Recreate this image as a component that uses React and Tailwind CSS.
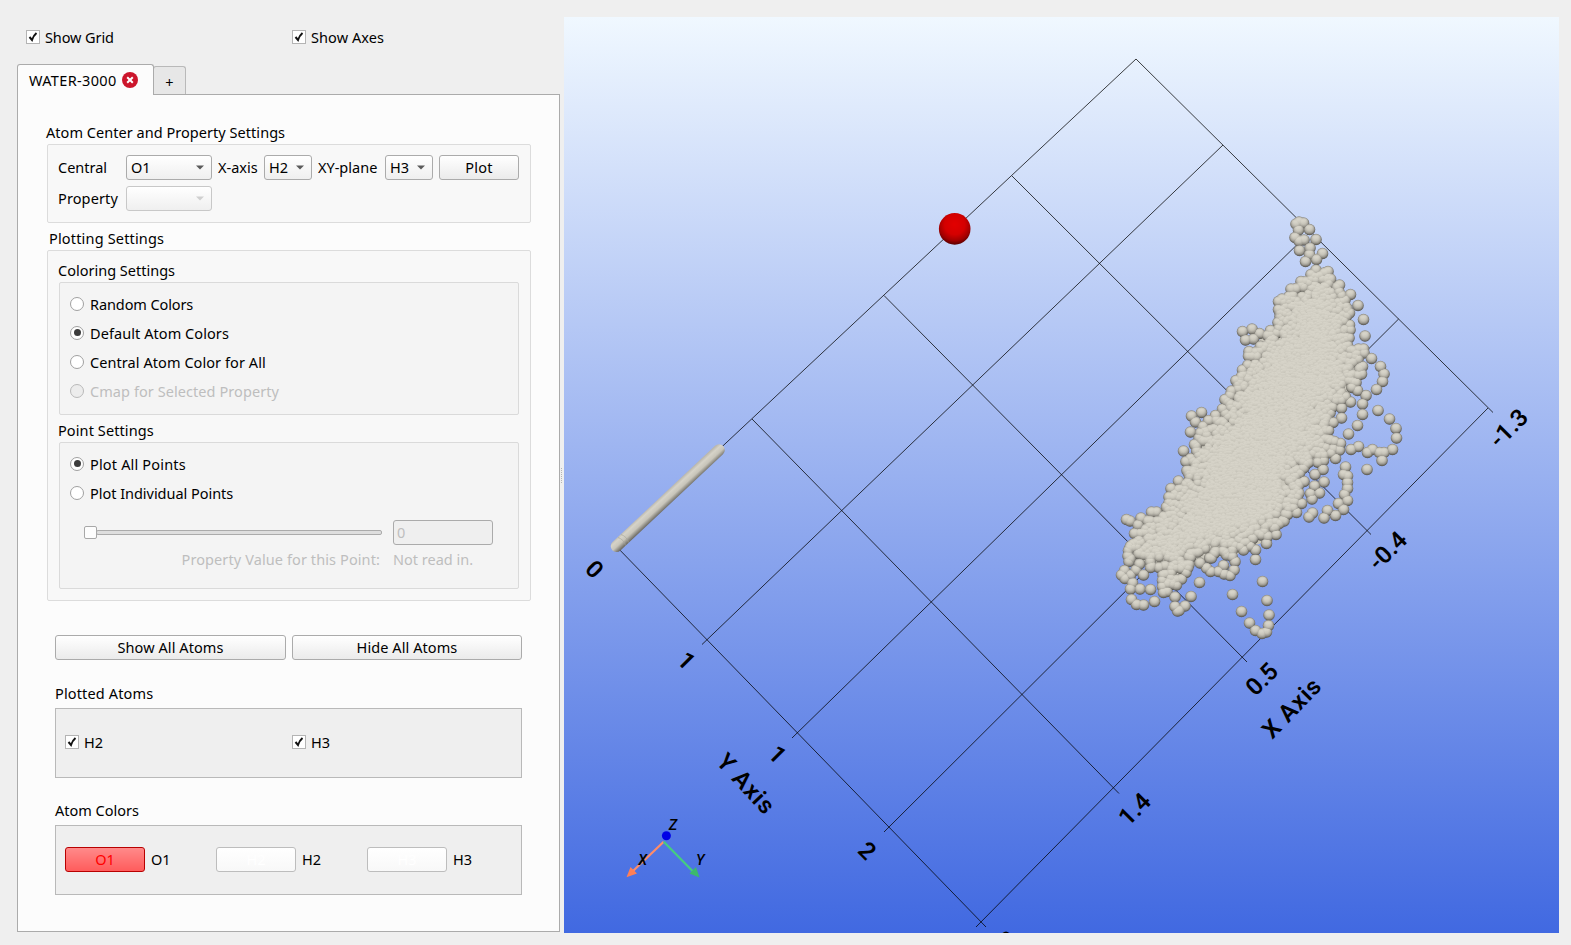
import React from "react";

const GRID = [
  [1136, 59, 616, 546], [1223, 145, 702, 644.5], [1310, 232, 792, 738], [1398.6, 319, 884, 832], [1488, 408, 976, 927],
  [1136, 59, 1493, 412.5], [1012, 176, 1371, 534.5], [884, 295.5, 1247, 662], [752, 419, 1119, 793.5], [614, 544, 986, 927],
];

const TICKS = [
  ["-1.3", 1508.5, 428, -45], ["-0.4", 1387.5, 550.5, -45], ["0.5", 1261.7, 679, -45], ["1.4", 1134.3, 809, -45], ["2.3", 1001, 947, -45],
  ["0", 594.7, 569, 45], ["1", 686.7, 660.7, 45], ["1", 777.7, 754.3, 45], ["2", 867.3, 850.7, 45],
];

const BALLS = [
  1299,222, 1296,224, 1303.5,223, 1298.5,230, 1309.5,229.5, 1295,237.5, 1299,241, 1304,240, 1316,239.5, 1299.5,250.5, 1310,248, 1309.5,254.5,
  1322.5,253.5, 1305.5,261.5, 1316.5,259.5, 1316,270, 1328,271.5, 1311,274.5, 1301,281.5, 1291,289, 1327.5,280, 1339.5,285, 1350.5,294.5,
  1358,305.5, 1363.5,319.5, 1365,336, 1282,299, 1278.5,301.5, 1289,301, 1278.5,309.5, 1280,316.5, 1278,322.5, 1270.5,330.5, 1259.5,333.5,
  1252,329, 1242.5,331.5, 1245.5,340, 1253.5,339, 1249,351.5, 1248.5,356, 1242.5,370, 1236,380.5, 1241,379, 1231.5,391, 1225,399.5,
  1222.5,409, 1215.5,415.5, 1201.5,412.5, 1191.5,416, 1195.5,422, 1208.5,420.5, 1203,426.5, 1190.5,432, 1199,438, 1347,308.5, 1349.5,313,
  1349.5,325, 1350,330, 1349,338, 1358.5,349, 1363.5,349, 1364,353, 1371.5,358.5, 1380.5,366.5, 1384,374, 1382.5,381.5, 1376.5,389.5,
  1366,395.5, 1362.5,404, 1362.5,414.5, 1357.5,425.5, 1348.5,434, 1378,410.5, 1389.5,419, 1396,428.5, 1396.5,438, 1357.5,390.5, 1350.5,402,
  1341.5,408, 1341.5,418, 1333,422.5, 1328.5,430.5, 1362.5,366.5, 1361.5,374, 1356,382.5, 1330,413, 1345,300, 1341,318,
  1183.5,451, 1194.5,444.5, 1186,461.5, 1190.5,458.5, 1187,470.5, 1196.5,470, 1178.5,481, 1185.5,484.5, 1171,488.5, 1169,497, 1175,494,
  1166.5,507, 1151.5,512, 1156.5,512, 1141,518, 1126.5,519.5, 1130,521, 1138,525, 1134.5,533.5, 1128.5,550.5, 1128,556, 1129,561.5,
  1124.5,570.5, 1121.5,575, 1125,578.5, 1130.5,575, 1136,570, 1143.5,575, 1150.5,567.5, 1159,567.5, 1132.5,583, 1130.5,589, 1140,589,
  1150.5,589.5, 1131.5,599.5, 1136.5,604.5, 1143.5,605, 1154.5,601.5, 1163,575, 1162.5,580.5, 1162.5,586.5, 1163.5,592.5, 1167,591.5,
  1175,597, 1191,596.5, 1185,606, 1177.5,611, 1175,606.5, 1179,610.5, 1176.5,585, 1181.5,579, 1186,572.5, 1171.5,579, 1199.5,582.5,
  1232.5,594.5, 1241.5,611.5, 1249.5,623, 1255.5,630.5, 1262,633.5, 1266.5,632, 1268.5,625.5, 1269,615, 1267,600.5, 1262.5,581.5,
  1255.5,559.5, 1255.5,550, 1230,575.5, 1224,574, 1218.5,571.5, 1210.5,571.5, 1206.5,568, 1234,570, 1235,561.5, 1223.5,565.5, 1211.5,558,
  1226.5,555, 1200,563, 1243.5,550, 1250,546, 1266.5,543.5, 1276,534.5, 1273.5,528, 1284,521, 1296.5,512.5, 1301.5,503.5, 1312,499,
  1310.5,493.5, 1319.5,493, 1324,482, 1314.5,486, 1304,481.5, 1315,474.5, 1323,469.5, 1304,467.5, 1323.5,460.5, 1335.5,458.5, 1339.5,450,
  1340.5,443.5, 1330,440, 1351,449.5, 1358.5,446.5, 1367.5,452.5, 1372.5,449.5, 1379.5,452.5, 1384,452.5, 1382,460.5, 1392.5,449.5,
  1367,469.5, 1345.5,467, 1343.5,474.5, 1347.5,476, 1347.5,482.5, 1347.5,488.5, 1344.5,494.5, 1347.5,500.5, 1338.5,503.5, 1343.5,509.5,
  1335.5,515.5, 1327.5,510.5, 1324,518, 1312.5,513, 1309,517,
];

const HULL = [
  [1316,272], [1326,273], [1338,286], [1347,297], [1348,325], [1349,345], [1361,351], [1360,372], [1354,385], [1346,400], [1337,405],
  [1329,413], [1327,430], [1337,444], [1331,455], [1321,461], [1304,468], [1299,480], [1302,492], [1299,503], [1284,519], [1272,533],
  [1262,543], [1244,549], [1234,557], [1222,556], [1205,562], [1190,567], [1178,581], [1166,588], [1162,570], [1140,565], [1130,562],
  [1129,548], [1136,533], [1146,521], [1167,509], [1171,494], [1187,484], [1188,465], [1195,445], [1201,430], [1223,411], [1227,398],
  [1243,372], [1249,353], [1262,337], [1279,325], [1280,303], [1301,284], [1311,276],
];

const LAYERS = [
  [5.8, "#8f8d85", "#55534e"],
  [5.3, "#b0ada4", "#6d6b64"],
  [4.7, "#c6c3b9", "#88857d"],
  [3.9, "#d2cfc4", "#a19e95"],
  [3.0, "#d7d4c9", "#b7b4aa"],
  [2.0, "#d7d4c9", "#c6c3b8"],
];

function edgeDistance(x, y) {
  let best = 1e9;
  let inside = false;
  for (let i = 0, j = HULL.length - 1; i < HULL.length; j = i++) {
    const [ax, ay] = HULL[i];
    const [bx, by] = HULL[j];
    if (ay > y !== by > y && x < ((bx - ax) * (y - ay)) / (by - ay) + ax) inside = !inside;
    const dx = bx - ax;
    const dy = by - ay;
    const t = Math.max(0, Math.min(1, ((x - ax) * dx + (y - ay) * dy) / (dx * dx + dy * dy)));
    best = Math.min(best, Math.hypot(ax + t * dx - x, ay + t * dy - y));
  }
  return inside ? best : -1;
}

function buildCloud() {
  let seed = 7;
  const rand = () => {
    seed = (seed * 16807) % 2147483647;
    return seed / 2147483647;
  };
  const layers = LAYERS.map(() => []);
  for (let i = 0; i < BALLS.length; i += 2) layers.forEach((l) => l.push([BALLS[i], BALLS[i + 1]]));
  const step = 2.2;
  for (let gy = 268; gy < 592; gy += step) {
    for (let gx = 1120; gx < 1368; gx += step) {
      const x = gx + rand() * step;
      const y = gy + rand() * step;
      const keep = rand();
      const d = edgeDistance(x, y);
      if (d < 0) continue;
      const s = Math.max(2.2, (y > 530 ? 5.8 : 5.3) - d * 0.12);
      if (keep > (step / s) ** 2) continue;
      LAYERS.forEach(([r], k) => {
        if (r <= s * 1.25 || k === 5) layers[k].push([Math.round(x * 10) / 10, Math.round(y * 10) / 10]);
      });
    }
  }
  return layers;
}

const CLOUD = buildCloud();

function Scene() {
  return (
    <svg className="block h-[916px] w-[995px]" viewBox="564 17 995 916">
      <defs>
        {LAYERS.map(([r, a, b], k) => (
          <linearGradient key={k} id={"shade" + k} x1="0.1" y1="0" x2="0.25" y2="1">
            <stop offset="0.2" stopColor={a} />
            <stop offset="1" stopColor={b} />
          </linearGradient>
        ))}
        <radialGradient id="red" cx="0.5" cy="0.36" r="0.64">
          <stop offset="0" stopColor="#e20000" />
          <stop offset="0.5" stopColor="#d40000" />
          <stop offset="0.8" stopColor="#a00000" />
          <stop offset="1" stopColor="#580000" />
        </radialGradient>
        <linearGradient id="tube" gradientUnits="userSpaceOnUse" x1="664" y1="493.5" x2="672" y2="502.2">
          <stop offset="0" stopColor="#bab7ad" />
          <stop offset="0.25" stopColor="#d6d3c8" />
          <stop offset="0.6" stopColor="#c8c5ba" />
          <stop offset="1" stopColor="#716f68" />
        </linearGradient>
      </defs>
      <g stroke="#000" strokeWidth="1" strokeOpacity="0.75">
        {GRID.map(([a, b, c, d], i) => (
          <line key={i} x1={a} y1={b} x2={c} y2={d} />
        ))}
      </g>
      <path d="M616.5 546.3 L719 450" stroke="url(#tube)" strokeWidth="11.6" strokeLinecap="round" />
      <path d="M618 537.5 q6 2 7.5 8 M621 534.5 q6 2 7.5 8" fill="none" stroke="#a5a299" strokeWidth="0.6" />
      <circle cx="954.7" cy="228.9" r="15.8" fill="url(#red)" />
      <polygon points={HULL.map((p) => p.join(",")).join(" ")} fill="#c9c6bb" />
      {CLOUD.map((pts, k) => (
        <g key={k} fill={"url(#shade" + k + ")"}>
          {pts.map(([x, y], i) => (
            <circle key={i} cx={x} cy={y - (5.8 - LAYERS[k][0]) * 0.15} r={LAYERS[k][0]} />
          ))}
        </g>
      ))}
      <g fontFamily="Roboto, 'Liberation Sans', sans-serif" fontWeight="600" fontSize="24" textAnchor="middle" fill="#000">
        {TICKS.map(([t, x, y, a], i) => (
          <text key={i} transform={`translate(${x} ${y}) rotate(${a})`} y="8.5">{t}</text>
        ))}
        <text transform="translate(1292 708) rotate(-46)" y="8" letterSpacing="0.9">X Axis</text>
        <text transform="translate(746 784) rotate(47)" y="8" letterSpacing="0.9">Y Axis</text>
      </g>
      <path d="M663.7 841.7 L633 871" stroke="#ff8c69" strokeWidth="2.2" />
      <path d="M626.5 877.3 L630.5 867 L637 873.5 Z" fill="#ff7f55" />
      <path d="M663.7 841.7 L693 871.5" stroke="#45cd80" strokeWidth="2.2" />
      <path d="M699.5 877.5 L689.5 873.5 L696 867 Z" fill="#3cb96d" />
      <circle cx="666.4" cy="835.7" r="4.5" fill="#0000e6" />
      <g fontFamily="Roboto, 'Liberation Sans', sans-serif" fontStyle="italic" fontWeight="500" fontSize="14.5" textAnchor="middle">
        <text x="642.7" y="864.5">X</text>
        <text x="700.3" y="864.7">Y</text>
        <text x="673" y="830">Z</text>
      </g>
    </svg>
  );
}

function Check({ label, className = "", textClass = "" }) {
  return (
    <div className={"flex h-[14px] items-center " + className}>
      <span className="flex h-[14px] w-[14px] items-center justify-center border border-[#b4b4b4] bg-white">
        <svg className="h-[12px] w-[12px]" viewBox="0 0 12 12" fill="none" stroke="#111" strokeWidth="2">
          <path d="M2.5 6 L5 9 Q6.5 4.5 9.5 2" />
        </svg>
      </span>
      <span className={"ml-[5px] whitespace-nowrap " + textClass}>{label}</span>
    </div>
  );
}

function Radio({ label, on, disabled, textClass = "tracking-[0.07px]" }) {
  return (
    <div className="flex h-[29px] items-center">
      <span className={"flex h-[14px] w-[14px] items-center justify-center rounded-full border " + (disabled ? "border-[#b9b9b9] bg-[#ececec]" : "border-[#a0a0a0] bg-white")}>
        {on && <span className="h-[7px] w-[7px] rounded-full bg-[#3c3c3c]" />}
      </span>
      <span className={"ml-[6px] " + textClass + (disabled ? " text-[#bebebe]" : "")}>{label}</span>
    </div>
  );
}

const BTN = "flex h-[25px] items-center rounded-[3px] border ";

function Combo({ label, className, disabled }) {
  return (
    <div className={BTN + "justify-between bg-[linear-gradient(#ffffff,#efefef)] pl-[4px] pr-[7px] " + (disabled ? "border-[#c8c8c8] " : "border-[#ababab] ") + className}>
      <span className="pb-[2px]">{label}</span>
      <svg className="h-[5px] w-[8px]" viewBox="0 0 8 5">
        <path d="M0 0.5 H8 L4 4.5 Z" fill={disabled ? "#cfcfcf" : "#5a5a5a"} />
      </svg>
    </div>
  );
}

function Button({ label, className }) {
  return <div className={BTN + "justify-center border-[#ababab] bg-[linear-gradient(#ffffff,#ebebeb)] pb-[2px] " + className}>{label}</div>;
}

function Swatch({ label, red }) {
  return (
    <div className="flex w-[151px] items-center">
      <div className={BTN + "w-[80px] justify-center pb-[2px] " + (red ? "border-[#b80000] bg-[linear-gradient(#ff8a8a,#ff5c5c)] text-[#ff0000]" : "border-[#bdbdbd] bg-[linear-gradient(#ffffff,#f8f8f8)] text-white")}>{label}</div>
      <span className="ml-[6px] pb-[2px]">{label}</span>
    </div>
  );
}

function Title({ children, className }) {
  return <div className={"h-[20px] leading-[18px] " + className}>{children}</div>;
}

export default function App() {
  return (
    <div className="flex h-[945px] w-[1571px] overflow-hidden bg-[#efefef] font-['Noto_Sans',sans-serif] text-[14.5px] leading-[20px] text-black">
      <div className="w-[560px] shrink-0 pl-[17px]">
        <div className="flex h-[64px] pl-[9px] pt-[30px]">
          <Check label="Show Grid" className="w-[266px]" textClass="tracking-[-0.1px]" />
          <Check label="Show Axes" textClass="tracking-[0.08px]" />
        </div>
        <div className="flex h-[30px] items-end">
          <div className="z-10 -mb-px flex h-[31px] w-[137px] items-center rounded-t-[3px] border border-b-0 border-[#ababab] bg-[#fcfcfc] pl-[11px]">
            <span className="whitespace-nowrap tracking-[0.35px]">WATER-3000</span>
            <svg className="ml-[5px] h-[16px] w-[16px]" viewBox="0 0 16 16">
              <circle cx="8" cy="8" r="8" fill="#cc162c" />
              <path d="M5.2 5.2 L10.8 10.8 M10.8 5.2 L5.2 10.8" stroke="#fff" strokeWidth="2" />
            </svg>
          </div>
          <div className="-ml-px flex h-[28px] w-[33px] items-center justify-center rounded-t-[3px] border border-b-0 border-[#b9b9b9] bg-[#e7e7e7] pt-[3px]">+</div>
        </div>
        <div className="h-[838px] w-[543px] border border-[#ababab] bg-[#fcfcfc] pt-[28px]">
          <Title className="pl-[28px] tracking-[0.04px]">Atom Center and Property Settings</Title>
          <div className="ml-[29px] mt-px h-[79px] w-[484px] rounded-[2px] border border-[#dcdcdc] bg-[#f8f8f8] pl-[10px] pt-[10px]">
            <div className="flex items-center whitespace-nowrap">
              <span className="w-[68px] pb-[2px]">Central</span>
              <Combo label="O1" className="w-[86px]" />
              <span className="ml-[6px] w-[46px] pb-[2px]">X-axis</span>
              <Combo label="H2" className="w-[48px]" />
              <span className="ml-[6px] w-[67px] pb-[2px]">XY-plane</span>
              <Combo label="H3" className="w-[48px]" />
              <Button label="Plot" className="ml-[6px] w-[80px] tracking-[0.3px]" />
            </div>
            <div className="mt-[6px] flex items-center">
              <span className="w-[68px] pb-[2px] tracking-[0.12px]">Property</span>
              <Combo label="" disabled className="w-[86px]" />
            </div>
          </div>
          <Title className="mt-[6px] pl-[31px] tracking-[0.17px]">Plotting Settings</Title>
          <div className="ml-[29px] mt-px h-[351px] w-[484px] rounded-[2px] border border-[#dcdcdc] bg-[#f8f8f8] pt-[10px]">
            <Title className="pl-[10px]">Coloring Settings</Title>
            <div className="ml-[11px] mt-px h-[133px] w-[460px] rounded-[2px] border border-[#dadada] bg-[#f4f4f4] pl-[10px] pt-[6px]">
              <Radio label="Random Colors" textClass="tracking-[-0.1px]" />
              <Radio label="Default Atom Colors" on />
              <Radio label="Central Atom Color for All" />
              <Radio label="Cmap for Selected Property" disabled />
            </div>
            <Title className="mt-[6px] pl-[10px] tracking-[0.1px]">Point Settings</Title>
            <div className="ml-[11px] mt-px h-[147px] w-[460px] rounded-[2px] border border-[#dadada] bg-[#f4f4f4] pl-[10px] pt-[6px]">
              <Radio label="Plot All Points" on textClass="tracking-[0.17px]" />
              <Radio label="Plot Individual Points" textClass="tracking-[-0.03px]" />
              <div className="mt-[13px] flex h-[25px] items-center pl-[14px]">
                <div className="z-10 h-[13px] w-[13px] rounded-[2px] border border-[#a8a8a8] bg-[#fdfdfd]" />
                <div className="-ml-px h-[5px] w-[286px] rounded-[2px] border border-[#ababab] bg-[#dedede]" />
                <div className="ml-[11px] flex h-[25px] w-[100px] items-center rounded-[3px] border border-[#ababab] bg-[#efefef] pb-[2px] pl-[3px] text-[#bebebe]">0</div>
              </div>
              <div className="mt-[4px] flex text-[#bebebe]">
                <span className="w-[310px] text-right tracking-[0.1px]">Property Value for this Point:</span>
                <span className="ml-[13px]">Not read in.</span>
              </div>
            </div>
          </div>
          <div className="ml-[37px] mt-[34px] flex gap-[6px]">
            <Button label="Show All Atoms" className="w-[231px] tracking-[0.08px]" />
            <Button label="Hide All Atoms" className="w-[230px] tracking-[0.08px]" />
          </div>
          <Title className="ml-[37px] mt-[24px] tracking-[0.15px]">Plotted Atoms</Title>
          <div className="ml-[37px] mt-[4px] flex h-[70px] w-[467px] items-center border border-[#b9b9b9] bg-[#efefef] pb-[2px] pl-[9px]">
            <Check label="H2" className="w-[227px]" />
            <Check label="H3" />
          </div>
          <Title className="ml-[37px] mt-[23px]">Atom Colors</Title>
          <div className="ml-[37px] mt-[4px] flex h-[70px] w-[467px] items-center border border-[#b9b9b9] bg-[#efefef] pb-px pl-[9px]">
            <Swatch label="O1" red />
            <Swatch label="H2" />
            <Swatch label="H3" />
          </div>
        </div>
      </div>
      <div className="flex w-[4px] shrink-0 flex-col gap-[1px] pl-[1px] pt-[468px]">
        {[0, 1, 2, 3, 4, 5, 6, 7].map((i) => (
          <span key={i} className="h-px w-px bg-[#b5b5b5]" />
        ))}
      </div>
      <div className="mt-[17px] h-[916px] w-[995px] bg-[linear-gradient(#f0f8ff,#4169e1)]">
        <Scene />
      </div>
    </div>
  );
}
